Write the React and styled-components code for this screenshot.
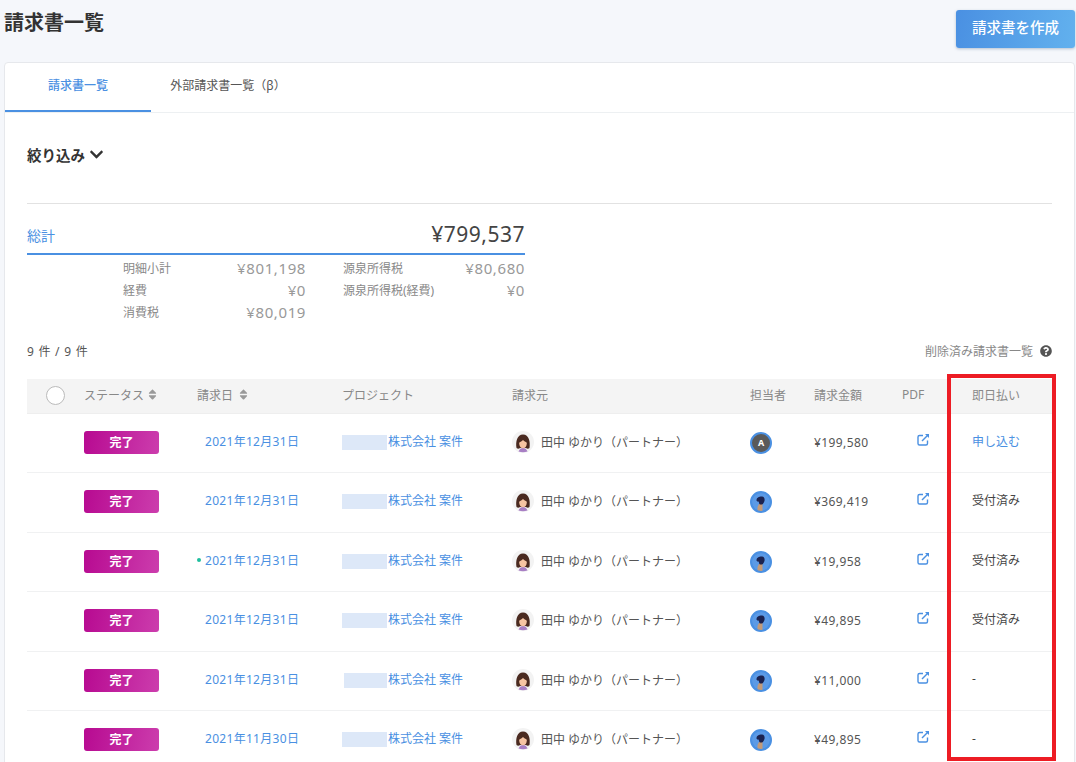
import React from "react";
import styled, { createGlobalStyle } from "styled-components";
import { FaChevronDown, FaQuestionCircle, FaSort } from "react-icons/fa";

const Global = createGlobalStyle`
  html, body { margin: 0; padding: 0; background: #f5f7fb; }
  body { font-family: "Noto Sans", "Noto Sans CJK JP", sans-serif; color: #333; overflow: hidden; }
  #root { height: 762px; overflow: hidden; }
`;

const Page = styled.div`
  position: relative;
  width: 1076px;
  height: 762px;
  overflow: hidden;
  padding: 10px 1px 0 4px;
  box-sizing: border-box;
`;
const TopBar = styled.header`
  display: flex;
  justify-content: space-between;
  align-items: flex-start;
  height: 51.5px;
`;
const Title = styled.h1`
  margin: 0;
  font-size: 20px;
  line-height: 26px;
  font-weight: 700;
  color: #333;
`;
const CreateButton = styled.button`
  width: 119px;
  height: 38px;
  border: 0;
  border-radius: 3px;
  padding: 0 0 5px;
  background: linear-gradient(100deg, #4a90e2, #62b1ee);
  box-shadow: 0 1px 3px rgba(60, 90, 130, 0.35);
  color: #fff;
  font: 500 14.5px "Noto Sans CJK JP", sans-serif;
`;
const Card = styled.main`
  background: #fff;
  border: 1px solid #e6e8ec;
  border-radius: 4px;
  height: 740px;
  box-sizing: border-box;
`;
const Tabs = styled.nav`
  display: flex;
  height: 49px;
  border-bottom: 1px solid #edf0f2;
`;
const Tab = styled.div`
  width: ${(p) => p.$w}px;
  display: flex;
  align-items: center;
  justify-content: center;
  padding: 0 0 4px ${(p) => (p.$active ? 0 : 8)}px;
  box-sizing: border-box;
  font-size: 12px;
  font-weight: ${(p) => (p.$active ? 500 : 400)};
  color: ${(p) => (p.$active ? "#4a90e2" : "#555")};
  box-shadow: ${(p) => (p.$active ? "inset 0 -2px 0 #4a90e2" : "none")};
`;
const Content = styled.section`
  padding: 0 22px;
`;
const Filter = styled.div`
  display: flex;
  align-items: center;
  gap: 4px;
  height: 20px;
  margin-top: 31.5px;
  font-size: 14.5px;
  font-weight: 700;
  color: #333;
  svg { font-size: 15px; }
`;
const Rule = styled.hr`
  margin: 38.5px 0 0;
  border: 0;
  border-top: 1px solid #e2e2e2;
`;
const Summary = styled.section`
  width: 498px;
`;
const Total = styled.div`
  display: flex;
  justify-content: space-between;
  align-items: flex-end;
  height: 51px;
  box-sizing: border-box;
  padding-bottom: 4px;
  border-bottom: 2px solid #4a90e2;
`;
const TotalLabel = styled.span`
  font-size: 14px;
  line-height: 24px;
  margin-bottom: 1px;
  color: #4a90e2;
`;
const TotalValue = styled.span`
  font-size: 21px;
  line-height: 30px;
  letter-spacing: 0.5px;
  color: #444;
`;
const Details = styled.div`
  display: grid;
  grid-template-columns: 96px 87px 37px 100px 82px;
  padding-left: 96px;
  grid-auto-rows: 22px;
  margin-top: 2px;
  align-items: center;
  width: 402px;
`;
const DetailLabel = styled.span`
  font-size: 12px;
  color: #888;
  white-space: nowrap;
  grid-column: ${(p) => p.$col};
`;
const DetailValue = styled.span`
  font-size: 15px;
  letter-spacing: 0.6px;
  color: #999;
  text-align: right;
  grid-column: ${(p) => p.$col};
`;
const MetaRow = styled.div`
  display: flex;
  justify-content: space-between;
  align-items: center;
  height: 20px;
  margin-top: 18px;
`;
const Count = styled.span`
  font-size: 12px;
  letter-spacing: 0.4px;
  word-spacing: 0.7px;
  color: #555;
`;
const DeletedLink = styled.span`
  display: flex;
  align-items: center;
  gap: 7px;
  font-size: 12px;
  color: #888;
  svg { font-size: 12px; color: #555; }
`;
const columns = "57px 113px 145px 170px 238px 64px 88px 70px 81px";
const HeaderRow = styled.div`
  display: grid;
  grid-template-columns: ${columns};
  align-items: center;
  height: 35px;
  margin-top: 18px;
  background: #f4f4f4;
  border-bottom: 1px solid #eee;
  box-sizing: border-box;
`;
const Head = styled.div`
  display: flex;
  align-items: center;
  gap: 4px;
  padding-bottom: 2px;
  font-size: 12px;
  color: #888;
  svg { font-size: 13px; color: #999; margin-left: ${(p) => p.$tight || 0}px; }
`;
const Radio = styled.span`
  width: 17px;
  height: 17px;
  margin-left: 19px;
  border-radius: 50%;
  background: #fff;
  border: 1px solid #bbb;
`;
const Row = styled.div`
  display: grid;
  grid-template-columns: ${columns};
  align-items: center;
  height: 59.5px;
  box-sizing: border-box;
  border-bottom: 1px solid #f0f1f2;
`;
const Badge = styled.span`
  display: flex;
  align-items: center;
  justify-content: center;
  width: 75px;
  height: 23px;
  margin-top: -1px;
  padding-bottom: 1px;
  box-sizing: border-box;
  border-radius: 3px;
  background: linear-gradient(100deg, #b70a91, #cc3dad);
  color: #fff;
  font-size: 12px;
  font-weight: 700;
`;
const DateCell = styled.div`
  position: relative;
  padding-left: 8px;
  margin-top: -4px;
  font-size: 12px;
  letter-spacing: 0.3px;
  color: #4a90e2;
`;
const Dot = styled.i`
  position: absolute;
  left: 0;
  top: 7px;
  width: 4px;
  height: 4px;
  border-radius: 50%;
  background: #1fbf9f;
`;
const ProjectCell = styled.div`
  display: flex;
  align-items: center;
  margin-top: -4px;
  font-size: 12px;
  color: #4a90e2;
  white-space: nowrap;
`;
const Redacted = styled.span`
  display: block;
  width: ${(p) => 45 - p.$inset}px;
  height: 15px;
  margin: 3px 1px 0 ${(p) => p.$inset}px;
  background: #dde8f8;
`;
const Person = styled.div`
  display: flex;
  align-items: center;
  gap: 7px;
  margin-top: -2px;
  font-size: 12px;
  color: #555;
  white-space: nowrap;
`;
const Amount = styled.div`
  margin-top: -1px;
  font-size: 12px;
  letter-spacing: 0.4px;
  color: #555;
`;
const Assignee = styled.span`
  display: flex;
  align-items: center;
  justify-content: center;
  width: 22px;
  height: 22px;
  border-radius: 50%;
  box-sizing: border-box;
  border: 2px solid #4a90e2;
  background: ${(p) => (p.$letter ? "#5a5a5a" : "#4a90e2")};
  color: #fff;
  font-size: 9px;
  font-weight: 700;
  overflow: hidden;
`;
const PdfCell = styled.div`
  display: flex;
  padding-left: 15px;
  margin-top: -7px;
  color: #4a90e2;
`;
const Payment = styled.div`
  margin-top: -4px;
  font-size: 12px;
  color: ${(p) => (p.$link ? "#4a90e2" : "#444")};
`;
const Highlight = styled.div`
  position: absolute;
  left: 947px;
  top: 374px;
  width: 109px;
  height: 387px;
  box-sizing: border-box;
  border: 4.5px solid #ed1c24;
  pointer-events: none;
`;

const WomanAvatar = () => (
  <svg width="22" height="22" viewBox="0 0 22 22" aria-hidden="true">
    <circle cx="11" cy="11" r="11" fill="#f3f3f3" />
    <path d="M4.500 17c-1-6 .5-13.500 6.500-13.500S18.500 11 17.500 17c-1 1-2.500 1-3.500 0H8c-1 1-2.500 1-3.500 0z" fill="#4a2a20" />
    <path d="M6.500 20.500c1-2.500 2.500-3.500 4.500-3.500s3.500 1 4.500 3.500c-3 1-6 1-9 0z" fill="#a87fc4" />
    <ellipse cx="11" cy="12.500" rx="3.800" ry="4.800" fill="#f6c4a2" />
    <path d="M7 11.500c-.5-3.500 1.500-5 4-5s4.500 1.500 4 5c-1.500-.5-3-1.500-4-2.500-1 1-2.500 2-4 2.500z" fill="#4a2a20" />
  </svg>
);

const ManAvatar = () => (
  <svg width="18" height="18" viewBox="0 0 18 18" aria-hidden="true">
    <circle cx="9" cy="9" r="9" fill="#5b9ae6" />
    <path d="M5.500 18v-4l1.500-3h3.500v7z" fill="#c39a78" />
    <path d="M4.500 7.500c0-3 2.500-4 5-4s3.500 2 3 4.500c-.5 1.500-1.500 3-2.500 3.500H8C7 11 7 9 6.500 8.500 6 8.500 4.500 8.500 4.500 7.500z" fill="#1b2350" />
  </svg>
);

const ExternalIcon = () => (
  <svg width="13" height="13" viewBox="0 0 13 13" fill="none" stroke="currentColor" strokeWidth="1.400" aria-hidden="true">
    <path d="M6 2.500H2.500A1.500 1.500 0 0 0 1 4v6.500A1.500 1.500 0 0 0 2.500 12H9a1.500 1.500 0 0 0 1.500-1.500V7.500" />
    <path d="M5 8l6-6" />
    <path d="M8 1h4v4z" fill="currentColor" stroke="none" />
  </svg>
);

const rows = [
  { date: "2021年12月31日", amount: "¥199,580", pay: "申し込む", link: true, letter: true, inset: 0 },
  { date: "2021年12月31日", amount: "¥369,419", pay: "受付済み", inset: 0 },
  { date: "2021年12月31日", amount: "¥19,958", pay: "受付済み", dot: true, inset: 0 },
  { date: "2021年12月31日", amount: "¥49,895", pay: "受付済み", inset: 0 },
  { date: "2021年12月31日", amount: "¥11,000", pay: "-", inset: 2 },
  { date: "2021年11月30日", amount: "¥49,895", pay: "-", inset: 0 },
];

export default function App() {
  return (
    <Page>
      <Global />
      <TopBar>
        <Title>請求書一覧</Title>
        <CreateButton>請求書を作成</CreateButton>
      </TopBar>
      <Card>
        <Tabs>
          <Tab $active $w={146}>請求書一覧</Tab>
          <Tab $w={146}>外部請求書一覧（β）</Tab>
        </Tabs>
        <Content>
          <Filter>絞り込み <FaChevronDown /></Filter>
          <Rule />
          <Summary>
            <Total>
              <TotalLabel>総計</TotalLabel>
              <TotalValue>¥799,537</TotalValue>
            </Total>
            <Details>
              <DetailLabel $col={1}>明細小計</DetailLabel>
              <DetailValue $col={2}>¥801,198</DetailValue>
              <DetailLabel $col={4}>源泉所得税</DetailLabel>
              <DetailValue $col={5}>¥80,680</DetailValue>
              <DetailLabel $col={1}>経費</DetailLabel>
              <DetailValue $col={2}>¥0</DetailValue>
              <DetailLabel $col={4}>源泉所得税(経費)</DetailLabel>
              <DetailValue $col={5}>¥0</DetailValue>
              <DetailLabel $col={1}>消費税</DetailLabel>
              <DetailValue $col={2}>¥80,019</DetailValue>
            </Details>
          </Summary>
          <MetaRow>
            <Count>9 件 / 9 件</Count>
            <DeletedLink>削除済み請求書一覧 <FaQuestionCircle /></DeletedLink>
          </MetaRow>
          <HeaderRow>
            <Radio />
            <Head $tight={-2}>ステータス <FaSort /></Head>
            <Head>請求日 <FaSort /></Head>
            <Head>プロジェクト</Head>
            <Head>請求元</Head>
            <Head>担当者</Head>
            <Head>請求金額</Head>
            <Head>PDF</Head>
            <Head>即日払い</Head>
          </HeaderRow>
          {rows.map((r, i) => (
            <Row key={i}>
              <span />
              <Badge>完了</Badge>
              <DateCell>{r.dot && <Dot />}{r.date}</DateCell>
              <ProjectCell><Redacted $inset={r.inset} />株式会社 案件</ProjectCell>
              <Person><WomanAvatar />田中 ゆかり（パートナー）</Person>
              <Assignee $letter={r.letter}>{r.letter ? "A" : <ManAvatar />}</Assignee>
              <Amount>{r.amount}</Amount>
              <PdfCell><ExternalIcon /></PdfCell>
              <Payment $link={r.link}>{r.pay}</Payment>
            </Row>
          ))}
        </Content>
      </Card>
      <Highlight />
    </Page>
  );
}
